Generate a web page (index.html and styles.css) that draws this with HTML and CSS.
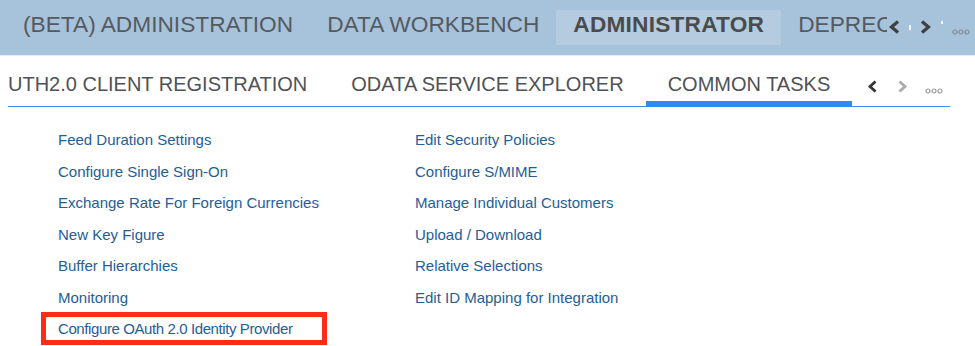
FILE: index.html
```html
<!DOCTYPE html>
<html>
<head>
<meta charset="utf-8">
<link rel="stylesheet" href="styles.css">
</head>
<body>
<header class="topbar">
  <nav class="top-tabs">
    <span class="top-tab">(BETA) ADMINISTRATION</span>
    <span class="top-tab">DATA WORKBENCH</span>
    <span class="top-tab active">ADMINISTRATOR</span>
    <span class="top-tab">DEPRECATED</span>
  </nav>
  <div class="top-ctrls">
    <svg class="chev" width="13" height="14" viewBox="0 0 13 14"><polyline points="10,1.5 3.5,7 10,12.5" fill="none" stroke="#3f3f3f" stroke-width="3.2"/></svg>
    <span class="wdot"></span>
    <svg class="chev" width="13" height="14" viewBox="0 0 13 14"><polyline points="3,1.5 9.5,7 3,12.5" fill="none" stroke="#3f3f3f" stroke-width="3.2"/></svg>
    <span class="wdot small"></span>
    <svg class="dots" width="18" height="6" viewBox="0 0 18 6"><circle cx="3" cy="3" r="2" fill="none" stroke="#7f8c98" stroke-width="1.2"/><circle cx="9" cy="3" r="2" fill="none" stroke="#7f8c98" stroke-width="1.2"/><circle cx="15" cy="3" r="2" fill="none" stroke="#7f8c98" stroke-width="1.2"/></svg>
  </div>
</header>
<div class="subbar">
  <nav class="sub-tabs">
    <span class="sub-tab first">UTH2.0 CLIENT REGISTRATION</span>
    <span class="sub-tab">ODATA SERVICE EXPLORER</span>
    <span class="sub-tab active">COMMON TASKS</span>
  </nav>
  <div class="sub-ctrls">
    <svg width="11" height="13" viewBox="0 0 11 13"><polyline points="8.5,1.5 3,6.5 8.5,11.5" fill="none" stroke="#333" stroke-width="2.8"/></svg>
    <svg width="11" height="13" viewBox="0 0 11 13"><polyline points="2.5,1.5 8,6.5 2.5,11.5" fill="none" stroke="#aaa" stroke-width="2.8"/></svg>
    <svg class="dots" width="18" height="6" viewBox="0 0 18 6"><circle cx="3" cy="3" r="2" fill="none" stroke="#999" stroke-width="1.2"/><circle cx="9" cy="3" r="2" fill="none" stroke="#999" stroke-width="1.2"/><circle cx="15" cy="3" r="2" fill="none" stroke="#999" stroke-width="1.2"/></svg>
  </div>
</div>
<main class="tasks">
  <ul class="col">
    <li><a>Feed Duration Settings</a></li>
    <li><a>Configure Single Sign-On</a></li>
    <li><a>Exchange Rate For Foreign Currencies</a></li>
    <li><a>New Key Figure</a></li>
    <li><a>Buffer Hierarchies</a></li>
    <li><a>Monitoring</a></li>
    <li class="highlight"><a>Configure OAuth 2.0 Identity Provider</a></li>
  </ul>
  <ul class="col">
    <li><a>Edit Security Policies</a></li>
    <li><a>Configure S/MIME</a></li>
    <li><a>Manage Individual Customers</a></li>
    <li><a>Upload / Download</a></li>
    <li><a>Relative Selections</a></li>
    <li><a>Edit ID Mapping for Integration</a></li>
  </ul>
</main>
</body>
</html>
```
FILE: styles.css
```css
html, body {
  margin: 0;
  padding: 0;
  background: #fff;
  width: 975px;
  height: 346px;
  overflow: hidden;
  font-family: "Liberation Sans", Arial, sans-serif;
}

.topbar {
  height: 55px;
  background: #a7c2db;
  display: flex;
  align-items: flex-start;
}

.top-tabs {
  display: flex;
  margin-left: 6px;
  width: 881px;
  overflow: hidden;
  white-space: nowrap;
  padding-top: 10px;
  flex: none;
}

.top-tab {
  font-size: 22.7px;
  color: #555a5f;
  padding: 1px 17px 0;
  height: 34px;
  flex: none;
}

.top-tab.active {
  background: #b4cbe0;
  font-weight: bold;
  color: #4b4b4b;
  letter-spacing: 0.2px;
}

.top-ctrls {
  display: flex;
  align-items: center;
  padding-top: 19px;
  margin-left: 1px;
}

.top-ctrls .chev { flex: none; }

.wdot {
  width: 2px;
  height: 5px;
  background: #fff;
  margin: 0 8px;
  opacity: .9;
}

.wdot.small {
  height: 3px;
  margin: 0 9px;
  align-self: flex-start;
  margin-top: 2px;
}

.top-ctrls .dots {
  margin-top: 10px;
}

.subbar {
  border-top: 1px solid #e4ecf4;
  display: flex;
  align-items: flex-start;
}

.sub-tabs {
  display: flex;
  margin-left: 8px;
  width: 942px;
  border-bottom: 1px solid #3a8fe8;
  flex: none;
  white-space: nowrap;
}

.sub-tab {
  position: relative;
  font-size: 20px;
  color: #4f5257;
  padding: 17px 22px 10px;
  line-height: 23px;
}

.sub-tab.first {
  padding-left: 0;
}

.sub-tab.active::after {
  content: "";
  position: absolute;
  left: 0;
  right: 0;
  bottom: -1px;
  height: 6px;
  background: #2f8cee;
}

.sub-ctrls {
  display: flex;
  align-items: center;
  gap: 19px;
  margin-left: -83px;
  padding-top: 22px;
}

.sub-ctrls .dots {
  margin-top: 10px;
  margin-left: -2px;
}

.tasks {
  display: grid;
  grid-template-columns: 357px auto;
  padding: 17px 0 0 58px;
}

.col {
  list-style: none;
  margin: 0;
  padding: 0;
}

.col li {
  font-size: 15px;
  line-height: 31.5px;
  height: 31.5px;
  color: #245e96;
}

.col a {
  color: #245e96;
  text-decoration: none;
}

.highlight {
  position: relative;
  letter-spacing: -0.4px;
}

.highlight::before {
  content: "";
  position: absolute;
  left: -17px;
  top: -1px;
  width: 276px;
  height: 23px;
  border: 5px solid #fb2d16;
}
```
